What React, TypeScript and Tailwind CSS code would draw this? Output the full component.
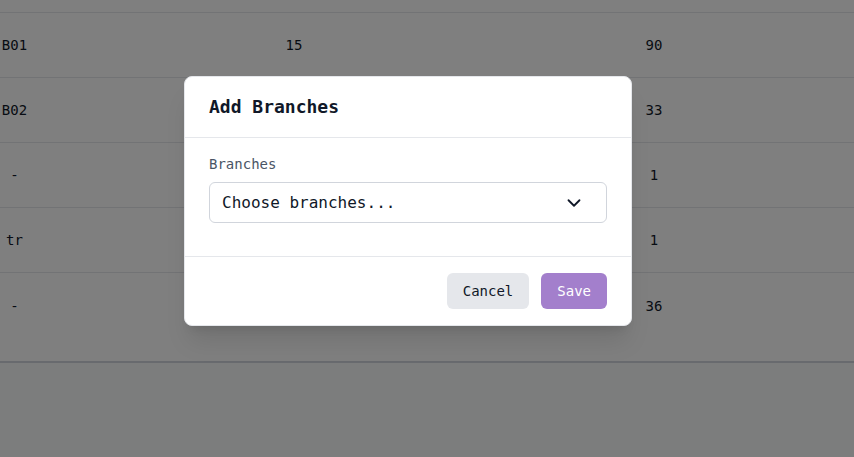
import { ChevronDown } from 'lucide-react'

const rows = [
  { code: 'B01', qty: '15', total: '90' },
  { code: 'B02', qty: '', total: '33' },
  { code: '-', qty: '', total: '1' },
  { code: 'tr', qty: '', total: '1' },
  { code: '-', qty: '', total: '36' },
]

const mono = { fontFamily: '"DejaVu Sans Mono", "Liberation Mono", monospace' }

export default function App() {
  return (
    <div className="relative w-[854px] h-[457px] overflow-hidden bg-gray-50" style={mono}>
      {/* 表格（被遮罩蓋住） */}
      <div className="bg-white border-b-2 border-gray-300">
        <div className="h-[13px] border-b border-gray-200" />
        {rows.map((r, i) => (
          <div
            key={i}
            className={`grid grid-cols-[29px_530px_190px_1fr] items-center text-sm text-gray-900 ${
              i === rows.length - 1 ? 'h-[88px] pb-[22px]' : 'h-[65px] border-b border-gray-200'
            }`}
          >
            <div className="text-center">{r.code}</div>
            <div className="text-center">{r.qty}</div>
            <div className="text-center">{r.total}</div>
            <div />
          </div>
        ))}
      </div>

      {/* 遮罩 */}
      <div className="absolute inset-0 bg-black/50" />

      {/* 對話框 */}
      <div className="absolute left-[184px] top-[76px] w-[448px] bg-white border border-gray-200 rounded-lg shadow-xl">
        <div className="px-6 py-4 border-b border-gray-200">
          <h2 className="text-lg font-bold text-gray-900 leading-7">Add Branches</h2>
        </div>

        <div className="px-6 pt-4 pb-[33px]">
          <label className="block text-sm text-gray-600 leading-5 mb-2">Branches</label>
          <div className="flex items-center justify-between h-[41px] pl-3 pr-[21px] border border-gray-300 rounded-md">
            <span className="text-base text-gray-900">Choose branches...</span>
            <ChevronDown size={22} strokeWidth={2} className="text-gray-900" />
          </div>
        </div>

        <div className="flex justify-end gap-3 px-6 py-4 border-t border-gray-200">
          <button className="h-9 px-4 rounded-md bg-gray-200 text-sm text-gray-900">Cancel</button>
          <button className="h-9 px-4 rounded-md bg-[#a37fcc] text-sm text-white">Save</button>
        </div>
      </div>
    </div>
  )
}
